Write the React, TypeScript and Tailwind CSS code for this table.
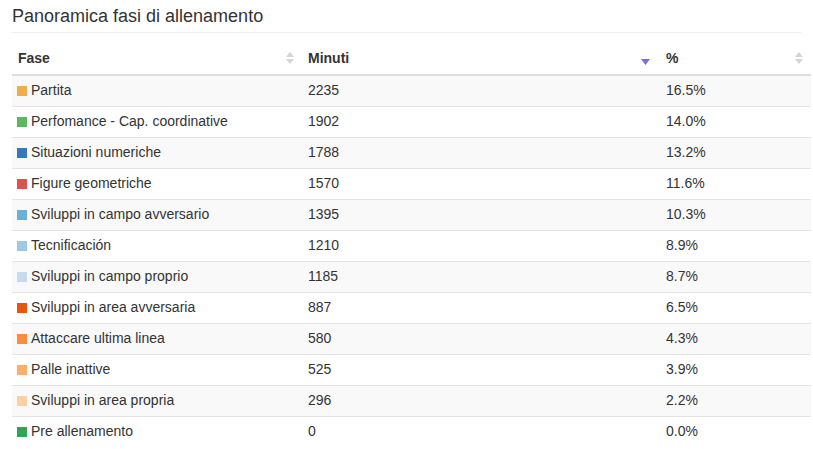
const rows = [
  { fase: "Partita", color: "#f0ad4e", min: 2235, pct: "16.5%" },
  { fase: "Perfomance - Cap. coordinative", color: "#5cb85c", min: 1902, pct: "14.0%" },
  { fase: "Situazioni numeriche", color: "#337ab7", min: 1788, pct: "13.2%" },
  { fase: "Figure geometriche", color: "#d9534f", min: 1570, pct: "11.6%" },
  { fase: "Sviluppi in campo avversario", color: "#6baed6", min: 1395, pct: "10.3%" },
  { fase: "Tecnificación", color: "#9ecae1", min: 1210, pct: "8.9%" },
  { fase: "Sviluppi in campo proprio", color: "#c6dbef", min: 1185, pct: "8.7%" },
  { fase: "Sviluppi in area avversaria", color: "#e6550d", min: 887, pct: "6.5%" },
  { fase: "Attaccare ultima linea", color: "#fd8d3c", min: 580, pct: "4.3%" },
  { fase: "Palle inattive", color: "#fdae6b", min: 525, pct: "3.9%" },
  { fase: "Sviluppi in area propria", color: "#fdd0a2", min: 296, pct: "2.2%" },
  { fase: "Pre allenamento", color: "#31a354", min: 0, pct: "0.0%" },
];

function SortBoth() {
  return (
    <svg width="8" height="12" viewBox="0 0 8 12" className="shrink-0">
      <path d="M4 0 L8 5 L0 5 Z" fill="#d4d4d4" />
      <path d="M4 12 L8 7 L0 7 Z" fill="#d4d4d4" />
    </svg>
  );
}

function SortDesc() {
  return (
    <svg width="9" height="6" viewBox="0 0 9 6" className="shrink-0">
      <path d="M0 0 L9 0 L4.5 6 Z" fill="#7474d0" />
    </svg>
  );
}

export default function App() {
  return (
    <div className="w-[813px] h-[449px] bg-white px-3 pt-[6px] text-[#333] font-['Liberation_Sans',Arial,sans-serif]">
      <h4 className="text-[18px] leading-[20px] pb-[6px] border-b border-[#eee]">
        Panoramica fasi di allenamento
      </h4>
      <table className="mt-[9px] w-[799px] table-fixed border-collapse text-[14px]">
        <colgroup>
          <col className="w-[288px]" />
          <col className="w-[358px]" />
          <col className="w-[153px]" />
        </colgroup>
        <thead>
          <tr className="border-b-2 border-[#ddd] h-[33px]">
            <th className="px-[6px] text-left font-bold">
              <div className="flex items-center justify-between">
                <span>Fase</span>
                <SortBoth />
              </div>
            </th>
            <th className="px-2 text-left font-bold">
              <div className="flex items-center justify-between">
                <span>Minuti</span>
                <span className="mt-[8px]">
                  <SortDesc />
                </span>
              </div>
            </th>
            <th className="px-2 text-left font-bold">
              <div className="flex items-center justify-between">
                <span>%</span>
                <SortBoth />
              </div>
            </th>
          </tr>
        </thead>
        <tbody>
          {rows.map((r, i) => (
            <tr
              key={r.fase}
              className={`h-[31px] border-t border-[#e4e4e4] first:border-t-0 ${
                i % 2 === 0 ? "bg-[#f9f9f9]" : "bg-white"
              }`}
            >
              <td className="px-[5px]">
                <div className="flex items-center gap-[4px]">
                  <span className="inline-block w-[10px] h-[10px]" style={{ backgroundColor: r.color }} />
                  <span>{r.fase}</span>
                </div>
              </td>
              <td className="px-2">{r.min}</td>
              <td className="px-2">{r.pct}</td>
            </tr>
          ))}
        </tbody>
      </table>
    </div>
  );
}
